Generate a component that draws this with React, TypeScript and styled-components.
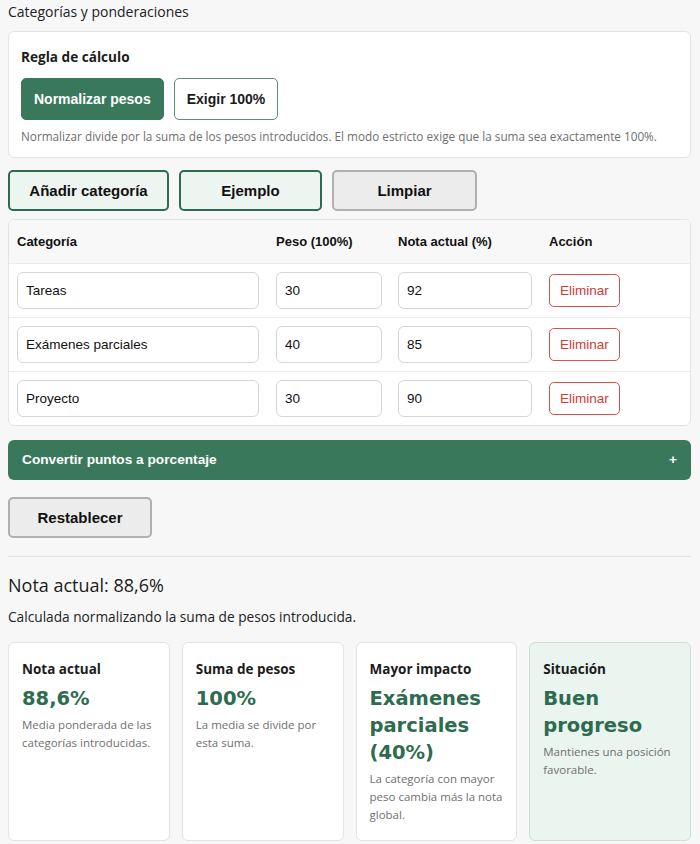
import styled, { createGlobalStyle } from "styled-components";

const rows = [
  { name: "Tareas", weight: "30", grade: "92" },
  { name: "Exámenes parciales", weight: "40", grade: "85" },
  { name: "Proyecto", weight: "30", grade: "90" },
];

const stats = [
  {
    title: "Nota actual",
    value: "88,6%",
    text: "Media ponderada de las categorías introducidas.",
  },
  {
    title: "Suma de pesos",
    value: "100%",
    text: "La media se divide por esta suma.",
  },
  {
    title: "Mayor impacto",
    value: "Exámenes parciales (40%)",
    text: "La categoría con mayor peso cambia más la nota global.",
  },
  {
    title: "Situación",
    value: "Buen progreso",
    text: "Mantienes una posición favorable.",
    good: true,
  },
];

const App = () => {
  return (
    <Page>
      <GlobalStyle />
      <SectionTitle>Categorías y ponderaciones</SectionTitle>

      <Panel>
        <PanelTitle>Regla de cálculo</PanelTitle>
        <ModeRow>
          <ModeButton $active>Normalizar pesos</ModeButton>
          <ModeButton>Exigir 100%</ModeButton>
        </ModeRow>
        <Hint>
          Normalizar divide por la suma de los pesos introducidos. El modo
          estricto exige que la suma sea exactamente 100%.
        </Hint>
      </Panel>

      <Toolbar>
        <ActionButton $w={161}>Añadir categoría</ActionButton>
        <ActionButton $w={143}>Ejemplo</ActionButton>
        <ActionButton $w={145} $plain>
          Limpiar
        </ActionButton>
      </Toolbar>

      <TableCard>
        <Table>
          <thead>
            <tr>
              <Th $w={259}>Categoría</Th>
              <Th $w={122}>Peso (100%)</Th>
              <Th $w={151}>Nota actual (%)</Th>
              <Th>Acción</Th>
            </tr>
          </thead>
          <tbody>
            {rows.map((r) => (
              <Tr key={r.name}>
                <Td>
                  <Field $w={242} defaultValue={r.name} />
                </Td>
                <Td>
                  <Field $w={106} defaultValue={r.weight} />
                </Td>
                <Td>
                  <Field $w={134} defaultValue={r.grade} />
                </Td>
                <Td>
                  <DeleteButton>Eliminar</DeleteButton>
                </Td>
              </Tr>
            ))}
          </tbody>
        </Table>
      </TableCard>

      <Accordion>
        <span>Convertir puntos a porcentaje</span>
        <span>+</span>
      </Accordion>

      <ActionButton $w={144} $plain>
        Restablecer
      </ActionButton>

      <Divider />

      <ResultTitle>Nota actual: 88,6%</ResultTitle>
      <ResultText>Calculada normalizando la suma de pesos introducida.</ResultText>

      <StatsGrid>
        {stats.map((s) => (
          <StatCard key={s.title} $good={s.good}>
            <StatTitle>{s.title}</StatTitle>
            <StatValue>{s.value}</StatValue>
            <StatText>{s.text}</StatText>
          </StatCard>
        ))}
      </StatsGrid>
    </Page>
  );
};

export default App;

const GlobalStyle = createGlobalStyle`
  body {
    margin: 0;
    background: #f7f7f7;
    color: #1b1b1b;
    font-family: "Open Sans", "Noto Sans", sans-serif;
  }
`;

const Page = styled.div`
  padding: 2px 9px 8px 8px;
  display: flex;
  flex-direction: column;
  align-items: flex-start;
`;

const SectionTitle = styled.div`
  font-size: 14px;
  line-height: 20px;
  color: #222;
  margin-bottom: 9px;
`;

const Panel = styled.div`
  align-self: stretch;
  background: #fff;
  border: 1px solid #e3e3e3;
  border-radius: 6px;
  padding: 14px 12px 12px;
`;

const PanelTitle = styled.div`
  font-weight: 700;
  font-size: 13.6px;
  line-height: 22px;
  margin-bottom: 10px;
`;

const ModeRow = styled.div`
  display: flex;
  gap: 10px;
`;

const ModeButton = styled.button<{ $active?: boolean }>`
  height: 42px;
  padding: 0 12px;
  border-radius: 5px;
  font-family: "Liberation Sans", Arial, sans-serif;
  font-weight: 700;
  font-size: 14px;
  color: ${(p) => (p.$active ? "#fff" : "#1b1b1b")};
  background: ${(p) => (p.$active ? "#3a785c" : "#fff")};
  border: 1px solid ${(p) => (p.$active ? "#3a785c" : "#5b8e77")};
`;

const Hint = styled.div`
  margin-top: 7px;
  font-size: 11.75px;
  line-height: 18px;
  color: #6f6f6f;
`;

const Toolbar = styled.div`
  display: flex;
  gap: 10px;
  margin-top: 12px;
`;

const ActionButton = styled.button<{ $w: number; $plain?: boolean }>`
  width: ${(p) => p.$w}px;
  height: 41px;
  border-radius: 5px;
  font-family: "Liberation Sans", Arial, sans-serif;
  font-weight: 700;
  font-size: 15px;
  color: #111;
  background: ${(p) => (p.$plain ? "#ececec" : "#edf5f1")};
  border: 2px solid ${(p) => (p.$plain ? "#b0b0b0" : "#2f6b52")};
`;

const TableCard = styled.div`
  align-self: stretch;
  margin-top: 8px;
  background: #fff;
  border: 1px solid #e3e3e3;
  border-radius: 6px;
  overflow: hidden;
`;

const Table = styled.table`
  width: 100%;
  table-layout: fixed;
  border-collapse: collapse;
  font-family: "Liberation Sans", Arial, sans-serif;
`;

const Th = styled.th<{ $w?: number }>`
  box-sizing: border-box;
  width: ${(p) => (p.$w ? `${p.$w}px` : "auto")};
  height: 43px;
  padding: 0 8px;
  text-align: left;
  font-size: 13px;
  font-weight: 700;
  color: #111;
  background: #f8f8f8;
`;

const Tr = styled.tr`
  border-top: 1px solid #ececec;
`;

const Td = styled.td`
  height: 53px;
  padding: 0 8px;
`;

const Field = styled.input<{ $w: number }>`
  display: block;
  box-sizing: border-box;
  width: ${(p) => p.$w}px;
  height: 37px;
  padding: 0 8px;
  border: 1px solid #d6d6d6;
  border-radius: 6px;
  font-family: "Liberation Sans", Arial, sans-serif;
  font-size: 13.5px;
  color: #111;
  background: #fff;
`;

const DeleteButton = styled.button`
  height: 33px;
  padding: 0 10px;
  border: 1px solid #d9534f;
  border-radius: 5px;
  background: #fff;
  color: #d03b36;
  font-family: "Liberation Sans", Arial, sans-serif;
  font-size: 13.5px;
`;

const Accordion = styled.div`
  align-self: stretch;
  margin-top: 14px;
  margin-bottom: 17px;
  height: 40px;
  padding: 0 14px;
  display: flex;
  align-items: center;
  justify-content: space-between;
  background: #3a785c;
  border-radius: 6px;
  color: #fff;
  font-family: "Liberation Sans", Arial, sans-serif;
  font-weight: 700;
  font-size: 13.7px;
`;

const Divider = styled.div`
  align-self: stretch;
  margin-top: 18px;
  border-top: 1px solid #e3e3e3;
`;

const ResultTitle = styled.div`
  margin-top: 16px;
  font-size: 18px;
  line-height: 25px;
`;

const ResultText = styled.div`
  margin-top: 9px;
  font-size: 13.7px;
  line-height: 20px;
  color: #222;
`;

const StatsGrid = styled.div`
  align-self: stretch;
  margin-top: 15px;
  display: grid;
  grid-template-columns: repeat(4, 1fr);
  gap: 12px;
`;

const StatCard = styled.div<{ $good?: boolean }>`
  min-height: 194px;
  box-sizing: border-box;
  padding: 16px 13px;
  border-radius: 6px;
  border: 1px solid ${(p) => (p.$good ? "#c9e2d4" : "#e3e3e3")};
  background: ${(p) => (p.$good ? "#eaf5ef" : "#fff")};
`;

const StatTitle = styled.div`
  font-weight: 700;
  font-size: 13.5px;
  line-height: 20px;
`;

const StatValue = styled.div`
  margin-top: 6px;
  font-family: "DejaVu Sans", Verdana, sans-serif;
  font-weight: 700;
  font-size: 19.5px;
  line-height: 27px;
  color: #2e6b4f;
`;

const StatText = styled.div`
  margin-top: 4px;
  font-size: 11.5px;
  line-height: 18px;
  color: #6f6f6f;
`;
